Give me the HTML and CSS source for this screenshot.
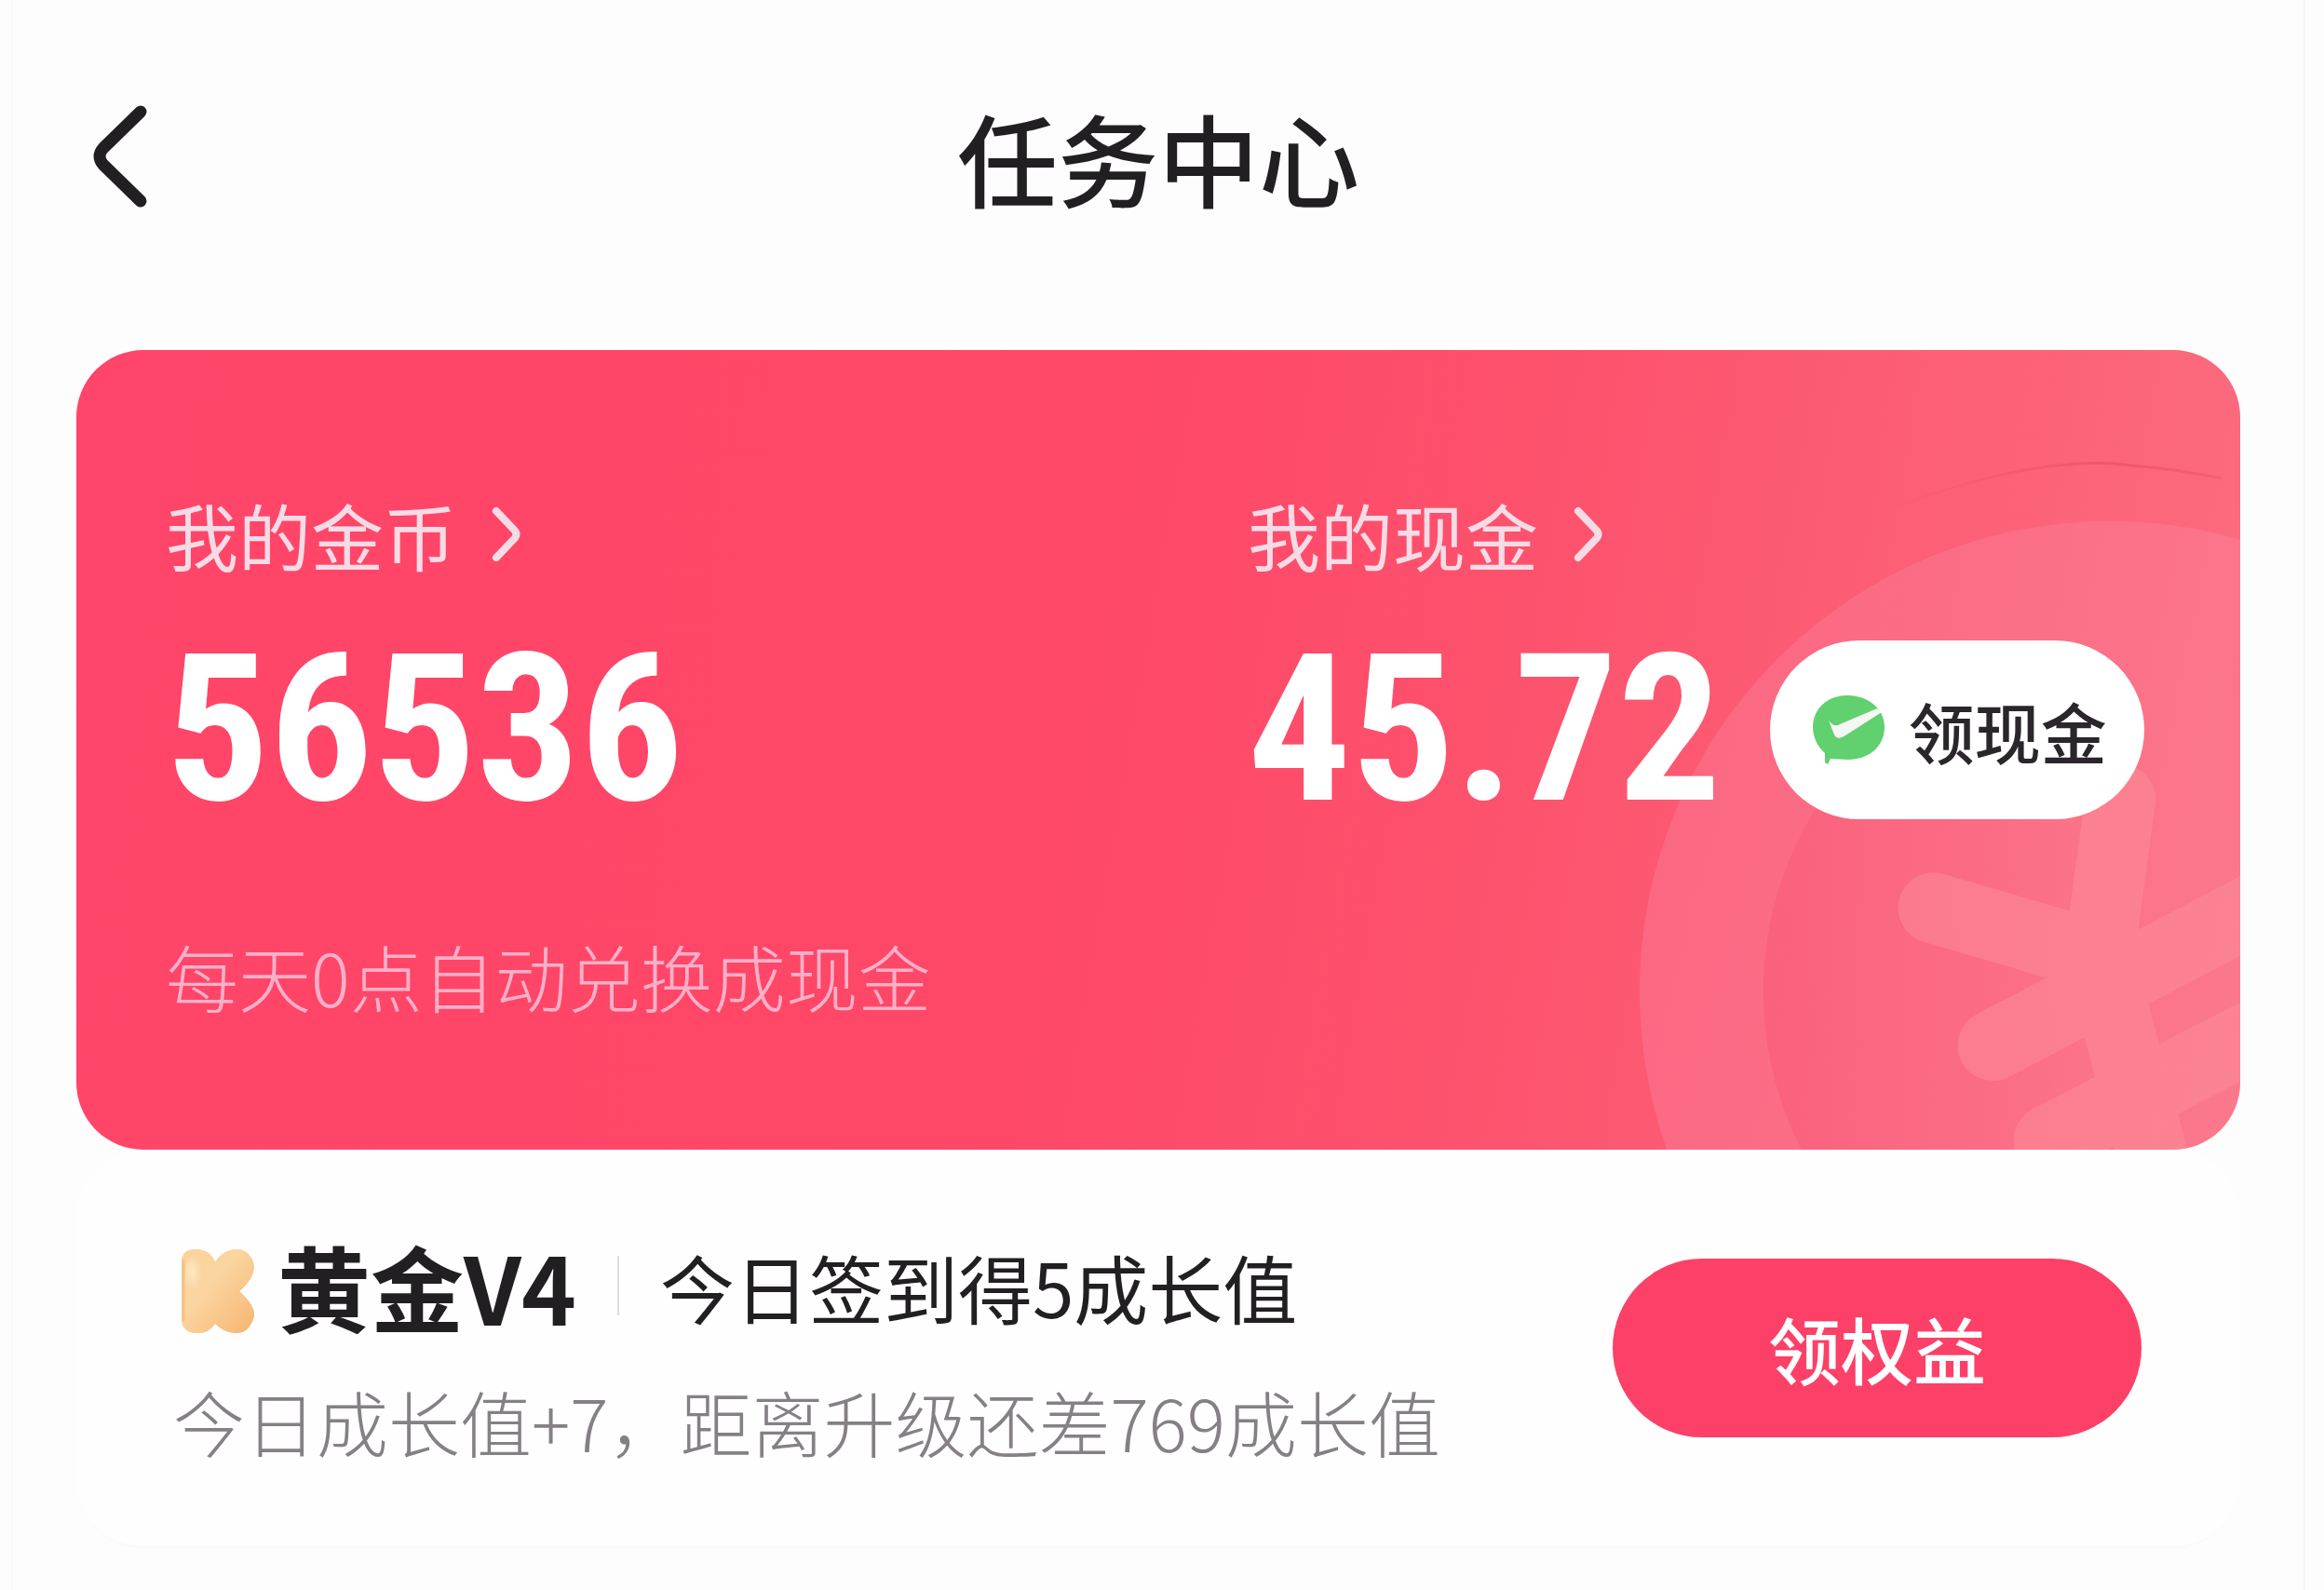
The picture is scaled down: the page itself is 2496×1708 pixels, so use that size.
FILE: index.html
```html
<!DOCTYPE html>
<html lang="zh-CN">
<head>
    <meta charset="UTF-8">
    <meta name="viewport" content="width=device-width, initial-scale=1.0">
    <title>任务中心</title>
    <link rel="stylesheet" href="styles.css">
</head>
<body>
    <div class="page">
        <header class="header">
            <button type="button" class="back" aria-label="返回">
                <svg width="60" height="112" viewBox="0 0 60 112" fill="none">
                    <path d="M51 8 L11 47 Q3 56 11 65 L51 104" stroke="#221f22" stroke-width="13" stroke-linecap="round" stroke-linejoin="round"/>
                </svg>
            </button>
            <h1>任务中心</h1>
        </header>

        <main>
            <section class="wallet">
                <!-- coin watermark -->
                <svg class="coin" viewBox="0 0 700 860" fill="none" aria-hidden="true">
                    <defs>
                        <linearGradient id="ring" x1="0" y1="1" x2="1" y2="0">
                            <stop offset="0" stop-color="#f98fb0" stop-opacity="0.3"/>
                            <stop offset="1" stop-color="#fc9db4" stop-opacity="0.2"/>
                        </linearGradient>
                        <linearGradient id="inner" x1="0" y1="0.6" x2="1" y2="0.5">
                            <stop offset="0" stop-color="#f84a68" stop-opacity="0.3"/>
                            <stop offset="0.5" stop-color="#f84a68" stop-opacity="0"/>
                        </linearGradient>
                        <linearGradient id="arc" x1="0" y1="0" x2="1" y2="0">
                            <stop offset="0" stop-color="#ef4a66" stop-opacity="0"/>
                            <stop offset="0.7" stop-color="#e84a66" stop-opacity="0.6"/>
                            <stop offset="1" stop-color="#e84a66" stop-opacity="0.3"/>
                        </linearGradient>
                    </defs>
                    <circle cx="560" cy="690" r="506" fill="url(#ring)"/>
                    <circle cx="560" cy="690" r="373" fill="url(#inner)"/>
                    <path d="M300 180 Q480 108 590 125 Q630 128 680 138" stroke="url(#arc)" stroke-width="3"/>
                    <g class="yen" stroke-width="76" stroke-linecap="round" stroke-linejoin="round">
                        <path d="M370 600 L548 652 L571 483 M548 652 L604 860 M434 748 L720 598 M494 850 L720 734"/>
                    </g>
                </svg>

                <div class="stats">
                    <div class="stat">
                        <a href="#coins" class="label">我的金币
                            <svg width="32" height="60" viewBox="0 0 32 60" fill="none">
                                <path d="M5 5 L25 26 Q28 30 25 34 L5 55" stroke="currentColor" stroke-width="8" stroke-linecap="round"/>
                            </svg>
                        </a>
                        <div class="value">
                            <span class="amount">56536</span>
                        </div>
                    </div>
                    <div class="stat">
                        <a href="#cash" class="label">我的现金
                            <svg width="32" height="60" viewBox="0 0 32 60" fill="none">
                                <path d="M5 5 L25 26 Q28 30 25 34 L5 55" stroke="currentColor" stroke-width="8" stroke-linecap="round"/>
                            </svg>
                        </a>
                        <div class="value">
                            <span class="amount">45.72</span>
                            <button type="button" class="btn btn-cash">
                                <svg width="78" height="76" viewBox="0 0 78 76">
                                    <path d="M38 1 C60 1 78 15 78 35 C78 56 61 70 39 70 C32 70 26 69 20 69 L17 75 L14 73 L14 63 C6 56 1 46 1 35 C1 15 17 1 38 1 Z" fill="#61d06f"/>
                                    <path d="M18 28 Q24 36 30 32 L70 15 L75 19 L36 44 Q27 50 24 43 Z" fill="#f5f7f4"/>
                                </svg>
                                领现金
                            </button>
                        </div>
                    </div>
                </div>
                <p class="hint">每天0点自动兑换成现金</p>
            </section>

            <section class="member">
                <div class="info">
                    <div class="level">
                        <svg class="badge" width="80" height="92" viewBox="0 0 80 92">
                            <defs>
                                <linearGradient id="gold" x1="0" y1="0" x2="1" y2="1">
                                    <stop offset="0" stop-color="#fbd29b"/>
                                    <stop offset="0.4" stop-color="#fbd5a1"/>
                                    <stop offset="1" stop-color="#f5b570"/>
                                </linearGradient>
                                <radialGradient id="shine" cx="0.25" cy="0.35" r="0.35">
                                    <stop offset="0" stop-color="#ffeccb" stop-opacity="0.8"/>
                                    <stop offset="1" stop-color="#ffeccb" stop-opacity="0"/>
                                </radialGradient>
                            </defs>
                            <path id="k" d="M1 15 Q1 1 16 1 Q32 1 37 15 Q46 1 60 1 Q73 1 78 15 Q82 30 63 46 Q78 60 79 70 Q79 77 73 85 Q69 91 58 91 Q46 90 37 81 Q31 91 18 91 Q1 91 1 75 Z" fill="url(#gold)"/>
                            <use href="#k" fill="none" stroke="none"/>
                            <ellipse cx="20" cy="34" rx="17" ry="30" fill="url(#shine)"/>
                            <path d="M3 14 V77" stroke="#f3b374" stroke-width="3" stroke-linecap="round" opacity="0.6"/>
                        </svg>
                        <h2>黄金V4</h2>
                        <span class="divider"></span>
                        <span class="sign">今日签到得5成长值</span>
                    </div>
                    <p class="progress">今日成长值+7，距离升级还差769成长值</p>
                </div>
                <button type="button" class="btn btn-rights">领权益</button>
            </section>
        </main>
    </div>
</body>
</html>
```

FILE: styles.css
```css
* {
    box-sizing: border-box;
}

body {
    margin: 0;
    background-color: #fdfdfd;
    color: #221f22;
    font-family: "Noto Sans CJK SC", sans-serif;
}

h1, h2, p {
    margin: 0;
}

button {
    border: none;
    padding: 0;
    background: none;
    color: inherit;
    font-family: inherit;
    cursor: pointer;
}

svg {
    display: block;
    flex-shrink: 0;
}

.page {
    min-height: 100vh;
    margin: 0 20px 0 12px;
    padding: 0 68px;
    border-left: 2px solid #fafafa;
    border-right: 2px solid #f6f6f6;
}

.header {
    display: grid;
    grid-template-columns: 1fr auto 1fr;
    align-items: center;
    padding: 92px 0 132px;
}

.back {
    justify-self: start;
    margin-left: 18px;
}

.header h1 {
    font-size: 108px;
    font-weight: 500;
    line-height: 152px;
}

/* wallet card */
.wallet {
    position: relative;
    overflow: hidden;
    padding: 150px 0 139px;
    border-radius: 72px;
    background: linear-gradient(100deg, #ff4569 0%, #ff4767 45%, #fd526d 65%, #fb6e80 100%);
    color: #fff;
}

.coin {
    position: absolute;
    right: 0;
    bottom: 0;
    height: 100%;
}

.yen {
    stroke: #fb8e98;
    opacity: 0.5;
}

.stats {
    position: relative;
    display: grid;
    grid-template-columns: 1fr 1fr;
}

.stat {
    padding-left: 96px;
}

.label {
    display: flex;
    align-items: center;
    gap: 38px;
    margin-bottom: 66px;
    color: #f5dbe6;
    font-size: 78px;
    line-height: 96px;
    text-decoration: none;
}

.value {
    display: flex;
    align-items: center;
    gap: 52px;
    height: 192px;
}

.amount {
    font-family: "Roboto Condensed", "Liberation Sans Narrow", Roboto, sans-serif;
    font-size: 220px;
    font-weight: 700;
    line-height: 192px;
}

.btn {
    height: 192px;
    border-radius: 96px;
    font-weight: 500;
    white-space: nowrap;
}

.btn-cash {
    display: flex;
    align-items: center;
    gap: 26px;
    padding: 0 40px 0 45px;
    background-color: #fff;
    color: #2a262c;
    font-size: 71px;
}

.hint {
    position: relative;
    margin-top: 120px;
    padding-left: 96px;
    color: #fbb0c8;
    font-size: 78px;
    font-weight: 300;
    line-height: 96px;
}

/* member level panel */
.member {
    display: flex;
    align-items: center;
    justify-content: space-between;
    padding: 86px 106px 86px 104px;
    border-bottom: 2px solid #fafafa;
    border-radius: 72px;
    background-color: #fefefe;
}

.level {
    display: flex;
    align-items: center;
    margin-bottom: 38px;
}

.badge {
    margin: 12px 24px 0 8px;
}

.level h2 {
    font-size: 100px;
    font-weight: 700;
    line-height: 120px;
}

.divider {
    width: 2px;
    height: 64px;
    margin: 0 44px;
    background-color: #dedede;
}

.sign {
    font-size: 80px;
    line-height: 120px;
}

.progress {
    color: #858085;
    font-size: 77px;
    font-weight: 300;
    line-height: 96px;
}

.btn-rights {
    padding: 0 167px;
    background-color: #fc4068;
    color: #fff;
    font-size: 78px;
}
```
